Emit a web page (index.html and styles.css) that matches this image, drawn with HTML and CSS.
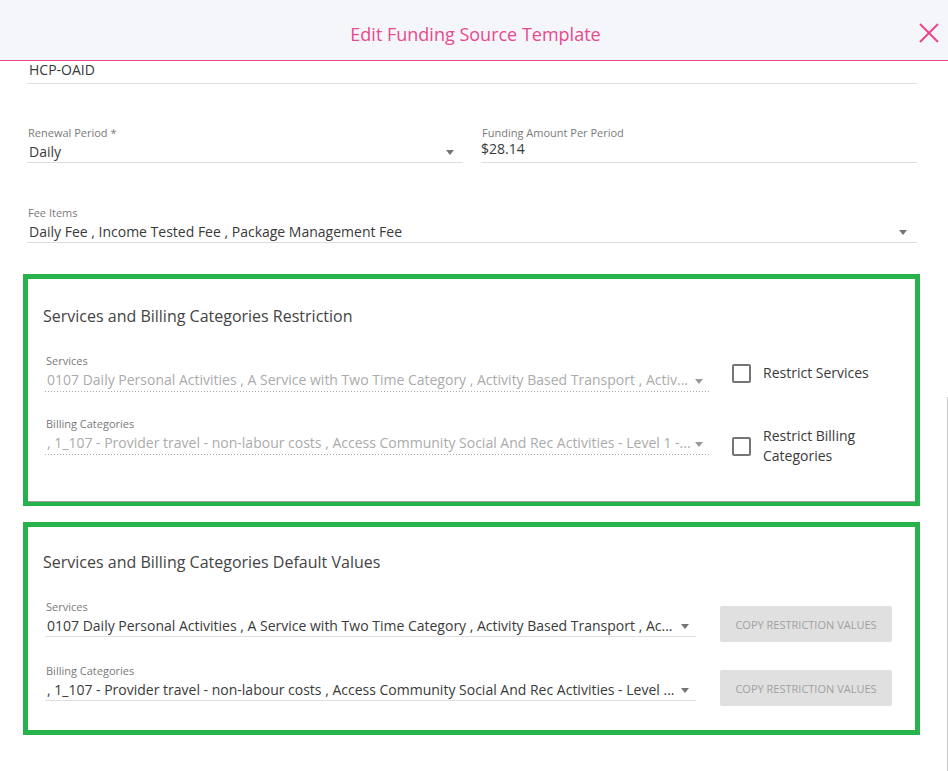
FILE: index.html
```html
<!DOCTYPE html>
<html lang="en">
<head>
    <meta charset="UTF-8">
    <meta name="viewport" content="width=device-width, initial-scale=1.0">
    <title>Edit Funding Source Template</title>
    <link rel="stylesheet" href="styles.css">
</head>
<body>
    <header class="modal-header">
        <span></span>
        <h1 class="modal-title">Edit Funding Source Template</h1>
        <button class="close-btn" aria-label="Close">
            <svg width="20" height="20" viewBox="0 0 20 20">
                <path d="M1 1 L19 19 M19 1 L1 19" stroke="#e8468c" stroke-width="2" fill="none"/>
            </svg>
        </button>
    </header>

    <div class="modal-body">
        <div class="field field-top">
            <div class="field-control">
                <div class="field-value">HCP-OAID</div>
            </div>
        </div>

        <div class="row-2">
            <div class="field">
                <div class="field-label">Renewal Period *</div>
                <div class="field-control">
                    <div class="field-value">Daily</div>
                    <span class="caret"></span>
                </div>
            </div>
            <div class="field field-input">
                <div class="field-label">Funding Amount Per Period</div>
                <div class="field-control">
                    <div class="field-value">$28.14</div>
                </div>
            </div>
        </div>

        <div class="field fee-items">
            <div class="field-label">Fee Items</div>
            <div class="field-control">
                <div class="field-value">Daily Fee , Income Tested Fee , Package Management Fee</div>
                <span class="caret"></span>
            </div>
        </div>

        <!-- restriction block -->
        <section class="section section-restrict">
            <div class="card">
                <h2 class="card-title">Services and Billing Categories Restriction</h2>

                <div class="card-row">
                    <div class="field field-disabled">
                        <div class="field-label">Services</div>
                        <div class="field-control">
                            <div class="field-value">0107 Daily Personal Activities , A Service with Two Time Category , Activity Based Transport , Activ...</div>
                            <span class="caret"></span>
                        </div>
                    </div>
                    <label class="check">
                        <span class="check-box"></span>
                        <span class="check-text">Restrict Services</span>
                    </label>
                </div>

                <div class="card-row">
                    <div class="field field-disabled">
                        <div class="field-label">Billing Categories</div>
                        <div class="field-control">
                            <div class="field-value">, 1_107 - Provider travel - non-labour costs , Access Community Social And Rec Activities - Level 1 -...</div>
                            <span class="caret"></span>
                        </div>
                    </div>
                    <label class="check">
                        <span class="check-box"></span>
                        <span class="check-text">Restrict Billing Categories</span>
                    </label>
                </div>
            </div>
        </section>

        <!-- default values block -->
        <section class="section section-defaults">
            <div class="card">
                <h2 class="card-title">Services and Billing Categories Default Values</h2>

                <div class="card-row">
                    <div class="field">
                        <div class="field-label">Services</div>
                        <div class="field-control">
                            <div class="field-value">0107 Daily Personal Activities , A Service with Two Time Category , Activity Based Transport , Ac...</div>
                            <span class="caret"></span>
                        </div>
                    </div>
                    <button class="copy-btn" disabled>COPY RESTRICTION VALUES</button>
                </div>

                <div class="card-row">
                    <div class="field">
                        <div class="field-label">Billing Categories</div>
                        <div class="field-control">
                            <div class="field-value">, 1_107 - Provider travel - non-labour costs , Access Community Social And Rec Activities - Level ...</div>
                            <span class="caret"></span>
                        </div>
                    </div>
                    <button class="copy-btn" disabled>COPY RESTRICTION VALUES</button>
                </div>
            </div>
        </section>
    </div>

    <div class="scroll-track"></div>
</body>
</html>
```

FILE: styles.css
```css
* {
    margin: 0;
    padding: 0;
    box-sizing: border-box;
}

html, body {
    height: 771px;
    overflow: hidden;
}

body {
    font-family: 'Open Sans', 'Noto Sans', sans-serif;
    color: #3a3a3a;
    background: #fff;
    position: relative;
}

/* header */

.modal-header {
    height: 61px;
    padding-top: 8px;
    background: #f5f6fa;
    border-bottom: 1px solid #e8468c;
    display: grid;
    grid-template-columns: 1fr auto 1fr;
    align-items: center;
}

.modal-title {
    font-size: 18px;
    font-weight: 400;
    line-height: 24px;
    color: #e8498f;
    margin-left: 3px;
}

.close-btn {
    justify-self: end;
    margin-right: 9px;
    margin-top: -2px;
    width: 20px;
    height: 20px;
    background: none;
    border: none;
    cursor: pointer;
    display: flex;
}

/* form */

.modal-body {
    padding: 0 31px 0 27px;
}

.field {
    border-bottom: 1px solid #dedede;
    min-width: 0;
}

.field-label {
    font-size: 11px;
    line-height: 15px;
    color: #7a7a7a;
    margin-bottom: 3px;
    padding-left: 1px;
}

.field-control {
    display: flex;
    align-items: center;
}

.field-value {
    flex: 1;
    min-width: 0;
    font-size: 14px;
    line-height: 18px;
    padding-left: 2px;
    padding-bottom: 1px;
    white-space: nowrap;
    overflow: hidden;
}

.caret {
    width: 0;
    height: 0;
    border-left: 4px solid transparent;
    border-right: 4px solid transparent;
    border-top: 5px solid #757575;
    margin: 0 9px 0 6px;
}

.field-top {
    padding-bottom: 3px;
}

.row-2 {
    display: grid;
    grid-template-columns: 1fr 1fr;
    gap: 18px;
    margin-top: 41px;
}

.field-input .field-label {
    margin-bottom: 0;
}

.field-input .field-value {
    line-height: 17px;
    padding-bottom: 5px;
    padding-left: 0;
}

.fee-items {
    margin-top: 42px;
}

.fee-items .caret {
    margin-right: 10px;
}

/* sections */

.section {
    border: 5px solid #27b24c;
    margin: 0 -3px 0 -4px;
}

.section-restrict {
    margin-top: 31px;
    border-bottom-width: 4px;
}

.section-restrict .card {
    padding: 26px 17px 35px;
    border-bottom: 1px solid #9e9e9e;
}

.section-defaults {
    margin-top: 16px;
}

.section-defaults .card {
    padding: 24px 23px 29px 17px;
}

.card-title {
    font-size: 16px;
    font-weight: 400;
    line-height: 22px;
    color: #444;
    margin-left: -2px;
}

.card-row {
    display: flex;
    align-items: flex-start;
    margin-top: 26px;
}

.section-restrict .card-row + .card-row {
    margin-top: 24px;
}

.card-row .field {
    flex: 1;
}

.field-disabled {
    border-bottom: none;
    padding-bottom: 1px;
    background-image: linear-gradient(to right, #a8a8a8 1px, transparent 1px);
    background-size: 3px 1px;
    background-repeat: repeat-x;
    background-position: left bottom;
}

.field-disabled .field-value {
    color: #ababab;
    padding-bottom: 2px;
}

.field-disabled .caret {
    border-top-color: #9a9a9a;
    margin-right: 8px;
}

.card-row .field .caret {
    margin-left: 3px;
    margin-right: 7px;
}

/* checkboxes */

.check {
    width: 166px;
    flex-shrink: 0;
    margin-left: 22px;
    padding-top: 10px;
    display: flex;
    align-items: center;
    gap: 12px;
    cursor: pointer;
}

.check-box {
    width: 19px;
    height: 19px;
    flex-shrink: 0;
    border: 2px solid #757575;
    border-radius: 2px;
}

.check-text {
    font-size: 14px;
    line-height: 20px;
    color: #3a3a3a;
}

/* buttons */

.copy-btn {
    width: 172px;
    height: 36px;
    flex-shrink: 0;
    margin: 7px 0 -8px 24px;
    background: #e0e0e0;
    border: none;
    border-radius: 2px;
    font-family: 'Open Sans', sans-serif;
    font-size: 11px;
    color: #a0a0a0;
}

.scroll-track {
    position: absolute;
    right: 0;
    top: 397px;
    bottom: 0;
    width: 1px;
    background: #c8c8c8;
}
```
